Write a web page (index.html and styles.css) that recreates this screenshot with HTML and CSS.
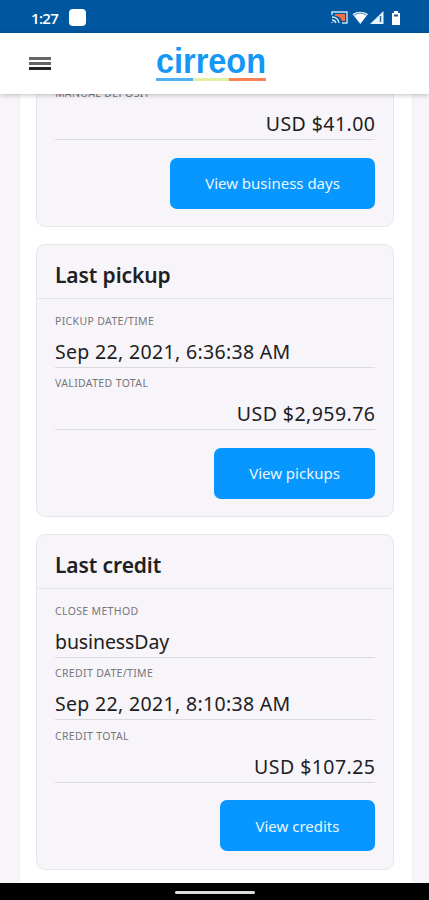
FILE: index.html
```html
<!DOCTYPE html>
<html lang="en">
<head>
<meta charset="utf-8">
<title>Cirreon</title>
<link rel="stylesheet" href="styles.css">
</head>
<body>
<div class="status">
  <span class="time">1:27</span><span class="notice"></span>
  <svg class="system" width="70" height="18" viewBox="0 0 70 18">
    <path d="M1 6V3h15v11h-5" fill="none" stroke="#c4e6fa" stroke-width="1.4"/>
    <path d="M4 5h10v7h-3Q9 7 4 7z" fill="#f36f43"/>
    <path d="M1 8q6 0 7 6M1 11q3 0 4 3M1 13v1" fill="none" stroke="#d5edfa" stroke-width="1.3"/>
    <path d="M21.500 5Q29 .5 37 5l-7.700 10z" fill="#fff"/>
    <path d="M23 6.300Q29.500 2 35.500 6.300" fill="none" stroke="#719ec5" stroke-width="1.200"/>
    <path d="M39 15 52.500 2v13z" fill="#e5f5ff"/>
    <path d="M49.500 7v6" stroke="#286ca9" stroke-width="1.500"/>
    <path d="M61 4h2V2h4v2h2v12h-8z" fill="#fff"/>
    <path d="M63 5.500h4v2h-4z" fill="#28548e"/>
  </svg>
</div>
<header class="topbar">
  <div class="menu"><i></i><i></i><i></i></div>
  <div class="brand">
    <svg width="111" height="30" viewBox="0 0 111 30">
      <text class="wordmark" x="0" y="26" textLength="110" lengthAdjust="spacingAndGlyphs">cirreon</text>
    </svg>
    <div class="stripe"><i></i><i></i><i></i></div>
  </div>
</header>
<main class="viewport">
  <div class="page">
    <section class="card">
      <div class="field"><div class="label">MANUAL DEPOSIT</div><div class="value amount">USD $41.00</div></div>
      <div class="button days"><span>View business days</span></div>
    </section>
    <section class="card">
      <h2>Last pickup</h2>
      <div class="field"><div class="label">PICKUP DATE/TIME</div><div class="value date">Sep 22, 2021, 6:36:38 AM</div></div>
      <div class="field"><div class="label">VALIDATED TOTAL</div><div class="value amount">USD $2,959.76</div></div>
      <div class="button pickups"><span>View pickups</span></div>
    </section>
    <section class="card">
      <h2>Last credit</h2>
      <div class="field"><div class="label">CLOSE METHOD</div><div class="value">businessDay</div></div>
      <div class="field"><div class="label">CREDIT DATE/TIME</div><div class="value date">Sep 22, 2021, 8:10:38 AM</div></div>
      <div class="field"><div class="label">CREDIT TOTAL</div><div class="value amount">USD $107.25</div></div>
      <div class="button credits"><span>View credits</span></div>
    </section>
  </div>
</main>
<footer class="navigation"><i></i></footer>
</body>
</html>
```
FILE: styles.css
```css
* { box-sizing: border-box; }
body {
  margin: 0;
  height: 900px;
  display: flex;
  flex-direction: column;
  overflow: hidden;
  background: #f7f5f9;
  color: #202022;
  font-family: "Noto Sans", sans-serif;
}
.status {
  height: 33px;
  flex: none;
  display: flex;
  align-items: center;
  padding: 2px 28px 0 31px;
  background: #00569f;
  color: #fff;
}
.time { width: 38px; font: 600 15px/20px "Open Sans", sans-serif; letter-spacing: -.7px; }
.notice { width: 17px; height: 17px; border-radius: 4px; background: #fff; }
.system { margin-left: auto; }
.topbar {
  position: relative;
  z-index: 1;
  flex: none;
  height: 61px;
  display: flex;
  padding-left: 29px;
  background: #fff;
  box-shadow: 0 1px 5px rgba(0, 0, 0, .25);
}
.menu { width: 22px; margin-top: 24px; display: flex; flex-direction: column; gap: 2px; }
.menu i { height: 3px; background: #666; }
.menu i:last-child { background: #242424; }
.brand { width: 111px; margin: 14px 0 0 105px; }
.brand svg { display: block; overflow: visible; }
.wordmark { font: 700 35px "Liberation Sans", sans-serif; fill: #1597f5; }
.stripe { display: flex; width: 110px; height: 3px; margin-top: 1px; }
.stripe i { flex: 1; background: #4fb0f6; }
.stripe i:nth-child(2) { background: #e2efa1; }
.stripe i:nth-child(3) { background: #f98355; }
.viewport { height: 789px; flex: none; overflow: hidden; padding: 0 16px 0 19px; }
.page {
  height: 100%;
  display: flex;
  flex-direction: column;
  justify-content: flex-end;
  gap: 16.500px;
  padding: 0 18px 13.500px 16px;
  border: solid #efedf1;
  border-width: 0 1px;
  background: #fff;
}
.card {
  flex: none;
  padding: 0 18px 17.500px;
  border: 1px solid #e8e8eb;
  border-radius: 9px;
  background: #f7f5f9;
}
h2 {
  height: 54px;
  margin: 0 -18px 6.500px;
  padding: 3px 18px 0;
  border-bottom: 1px solid #e5e6e8;
  font-size: 21px;
  line-height: 54px;
  font-weight: 600;
  letter-spacing: -.1px;
}
.field { height: 62.500px; border-bottom: 1px solid #dcdce0; }
.label { padding-top: 7.500px; font-size: 10.500px; line-height: 16px; letter-spacing: .35px; color: #77767b; white-space: nowrap; }
.value { font-size: 19.500px; line-height: 26px; padding-top: 10px; letter-spacing: -.1px; white-space: nowrap; }
.date { letter-spacing: .33px; }
.amount { margin-right: -.45px; text-align: right; letter-spacing: .45px; }
.button {
  height: 51px;
  margin: 17.500px 0 0 auto;
  display: flex;
  align-items: center;
  justify-content: center;
  border-radius: 7px;
  background: #0797fe;
  color: #e9f6ff;
  font-size: 15px;
}
.days { width: 205px; }
.pickups { width: 161px; }
.credits { width: 155px; }
.navigation {
  height: 17px;
  flex: none;
  display: flex;
  justify-content: center;
  padding-top: 8px;
  background: #000;
}
.navigation i { width: 80px; height: 3px; border-radius: 2px; background: #ddd; }
```
